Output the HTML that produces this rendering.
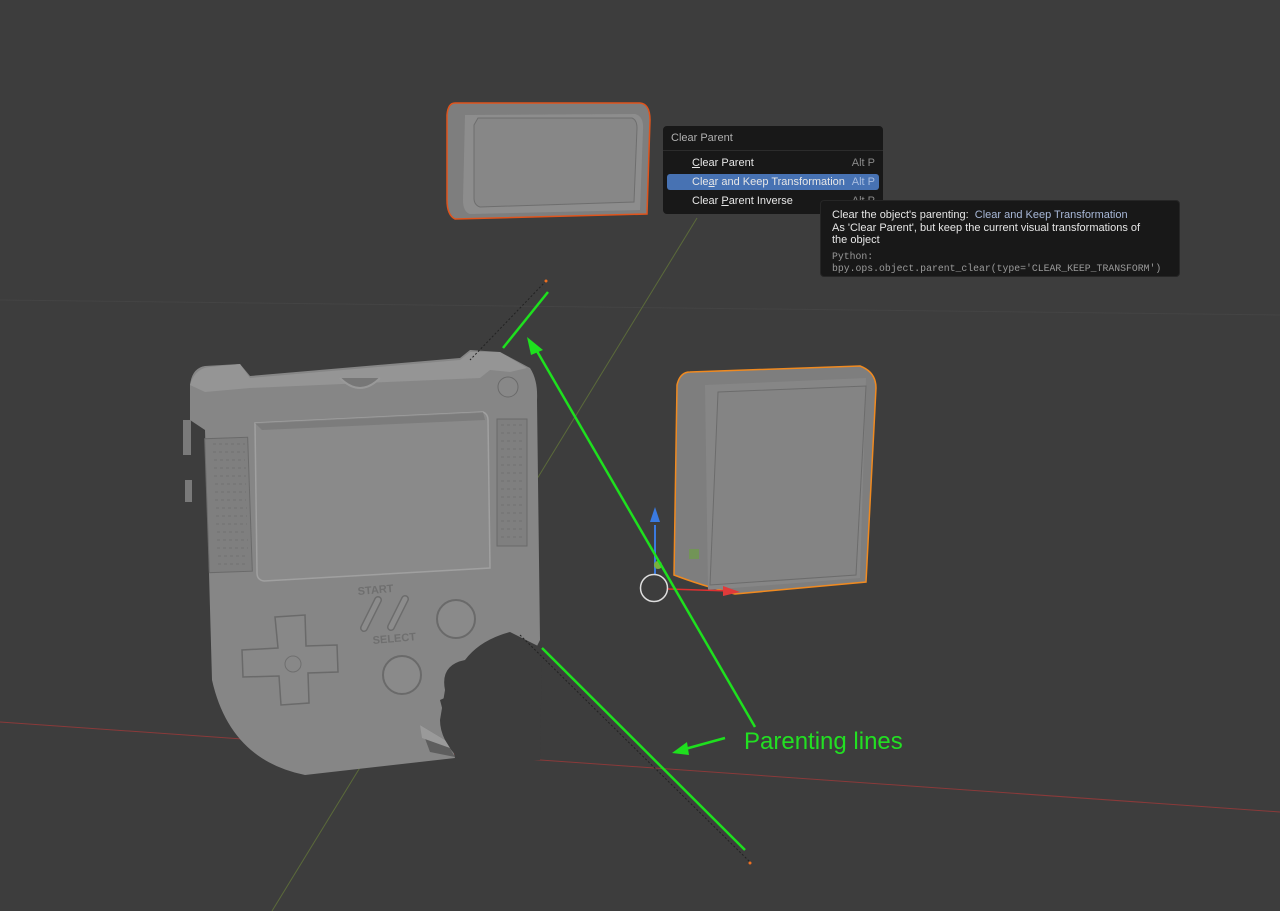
<!DOCTYPE html>
<html><head><meta charset="utf-8"><style>
html,body{margin:0;padding:0;width:1280px;height:911px;overflow:hidden;background:#3d3d3d;font-family:"Liberation Sans","DejaVu Sans",sans-serif}
svg{position:absolute;left:0;top:0}
.menu{position:absolute;left:663px;top:126px;width:220px;height:88px;background:#181818;border-radius:4px;font-size:11px;color:#e6e6e6}
.menu .t{position:absolute;left:8px;top:6px;color:#b0b0b0}
.menu .sep{position:absolute;left:0;right:0;top:24px;height:1px;background:#2c2c2c}
.it{position:absolute;left:4px;width:212px;height:16px;line-height:16px;border-radius:3px}
.it span{position:absolute;left:25px}
.it b{position:absolute;right:4px;font-weight:normal;color:#8a8a8a}
.hl{background:#4772b3}
.hl b{color:#a8bde0}
.tip{position:absolute;left:820px;top:200px;width:360px;height:77px;background:#181818;border:1px solid #262626;border-radius:4px;font-size:11px;color:#e6e6e6;box-sizing:border-box;padding:8px 11px;line-height:12.5px}
.tip .m{font-family:"Liberation Mono","DejaVu Sans Mono",monospace;color:#9a9a9a;margin-top:4px;font-size:9.8px}
.lbl{position:absolute;left:744px;top:728px;font-size:24px;color:#22e022}
</style></head><body>
<svg width="1280" height="911" viewBox="0 0 1280 911">
<line x1="0" y1="300" x2="1280" y2="315" stroke="#444" stroke-width="1"/>
<line x1="0" y1="722" x2="1280" y2="812" stroke="#8a3a3a" stroke-width="1"/>
<line x1="272" y1="911" x2="697" y2="218" stroke="#5b6a3a" stroke-width="1"/>
<!-- top cartridge -->
<path d="M455,103 L640,103 Q650,104 650,120 L647,214 L455,219 Q447,215 447,200 L447,115 Q448,103 455,103Z" fill="#7e7e7e" stroke="#e0541c" stroke-width="1.5"/>
<path d="M465,115 L635,114 Q644,116 643,130 L640,210 L470,214 Q463,212 463,200Z" fill="#8d8d8d"/>
<path d="M478,118 L632,118 Q637,120 637,128 L634,202 L480,207 Q474,205 474,198 L474,125Z" fill="#878787" stroke="#6e6e6e"/>
<!-- right box -->
<path d="M690,372 L860,366 Q876,372 876,388 L866,582 L735,594 Q700,585 674,575 L677,385 Q680,372 690,372Z" fill="#7e7e7e" stroke="#f08a20" stroke-width="1.5"/>
<path d="M705,385 L866,378 L860,578 L708,590 Z" fill="#868686"/>
<path d="M718,392 L866,386 L856,575 L710,585 Z" fill="#848484" stroke="#6c6c6c"/>
<rect x="689" y="549" width="10" height="10" fill="#6f9a4e" opacity="0.8"/>
<!-- gizmo -->
<line x1="655" y1="525" x2="655" y2="575" stroke="#3a7ae0" stroke-width="2"/>
<path d="M650,522 L655,507 L660,522Z" fill="#3a7ae0"/>
<line x1="668" y1="589" x2="730" y2="591" stroke="#e03030" stroke-width="1.5"/>
<path d="M723,586 L740,592 L723,596Z" fill="#e03a3a"/>
<circle cx="654" cy="588" r="13.5" fill="none" stroke="#ddd" stroke-width="1.5"/>
<circle cx="658" cy="565" r="4" fill="#7ab040"/>
<!-- gameboy body -->
<path d="M205,366 L240,364 L250,376 L460,358 L470,350 L500,352 L530,368 Q538,380 537,400 L540,640 L530,660 L440,700 L455,758 L305,775 Q230,760 212,680 L205,430 L190,420 L190,385 Q192,368 205,366Z" fill="#868686"/>
<path d="M190,385 Q195,368 210,367 L240,364 L250,378 L460,360 L470,352 L500,352 L527,368 L510,372 L490,370 L480,378 L250,388 L205,392 Z" fill="#959595"/>
<path d="M340,378 Q360,398 380,378" fill="#777" stroke="#999" stroke-width="2"/>
<circle cx="508" cy="387" r="10" fill="#888" stroke="#6a6a6a"/>
<rect x="183" y="420" width="8" height="35" fill="#7a7a7a"/>
<rect x="185" y="480" width="7" height="22" fill="#7a7a7a"/>
<!-- screen -->
<path d="M255,423 L483,412 Q488,414 488,420 L490,568 L264,581 Q257,580 257,573Z" fill="#8a8a8a" stroke="#a0a0a0" stroke-width="1.5"/>
<path d="M255,423 L483,412 L485,420 L262,430Z" fill="#6e6e6e" opacity="0.5"/>
<!-- grilles -->
<rect x="207" y="438" width="43" height="134" fill="#7f7f7f" stroke="#6a6a6a" transform="rotate(-2 228 505)"/>
<rect x="497" y="419" width="30" height="127" fill="#7f7f7f" stroke="#6a6a6a"/>
<g fill="none" stroke="#6e6e6e" stroke-width="0.8">
<path d="M213,444 L245,444 M213,452 L245,452 M214,460 L245,460 M214,468 L246,468 M214,476 L246,476 M215,484 L246,484 M215,492 L246,492 M215,500 L246,500 M216,508 L247,508 M216,516 L247,516 M216,524 L247,524 M217,532 L247,532 M217,540 L248,540 M217,548 L248,548 M218,556 L248,556 M218,564 L248,564" stroke-dasharray="3 3"/>
<path d="M501,425 L523,425 M501,433 L523,433 M501,441 L523,441 M501,449 L523,449 M501,457 L523,457 M501,465 L523,465 M501,473 L523,473 M501,481 L523,481 M501,489 L523,489 M501,497 L523,497 M501,505 L523,505 M501,513 L523,513 M501,521 L523,521 M501,529 L523,529 M501,537 L523,537" stroke-dasharray="3 3"/>
</g>
<!-- dpad -->
<path d="M275,617 L305,615 L306,646 L337,645 L338,672 L308,673 L309,703 L281,705 L279,676 L243,677 L242,650 L278,648Z" fill="#888" stroke="#6a6a6a" stroke-width="1.5"/>
<circle cx="293" cy="664" r="8" fill="none" stroke="#6f6f6f"/>
<!-- start/select -->
<path d="M364,628 L378,600" stroke="#6c6c6c" stroke-width="8" stroke-linecap="round"/>
<path d="M364,628 L378,600" stroke="#8c8c8c" stroke-width="5" stroke-linecap="round"/>
<path d="M391,627 L405,599" stroke="#6c6c6c" stroke-width="8" stroke-linecap="round"/>
<path d="M391,627 L405,599" stroke="#8c8c8c" stroke-width="5" stroke-linecap="round"/>
<text x="358" y="595" font-size="11" fill="#6f6f6f" font-family="Liberation Sans" font-weight="bold" transform="rotate(-5 358 595)">START</text>
<text x="373" y="644" font-size="11" fill="#6f6f6f" font-family="Liberation Sans" font-weight="bold" transform="rotate(-5 373 644)">SELECT</text>
<circle cx="456" cy="619" r="19" fill="#8a8a8a" stroke="#6a6a6a" stroke-width="2"/>
<circle cx="402" cy="675" r="19" fill="#8a8a8a" stroke="#6a6a6a" stroke-width="2"/>
<!-- bite -->
<path d="M445,690 Q440,665 465,660 Q480,640 510,632 L542,648 L540,760 L460,760 Q440,740 440,720Z" fill="#3d3d3d"/>
<path d="M420,725 L445,740 L455,757 L430,752 Z" fill="#5e5e5e"/>
<path d="M420,725 L445,740 L450,748 L422,738 Z" fill="#9a9a9a"/>
<!-- dashed parent lines -->
<line x1="546" y1="281" x2="470" y2="360" stroke="#222" stroke-width="1" stroke-dasharray="2 2"/>
<line x1="520" y1="635" x2="750" y2="862" stroke="#222" stroke-width="1" stroke-dasharray="2 2"/>
<circle cx="546" cy="281" r="1.5" fill="#f07020"/>
<circle cx="750" cy="863" r="1.5" fill="#f07020"/>
<!-- green annotation -->
<g stroke="#1ee01e" stroke-width="2.5" fill="#1ee01e">
<line x1="503" y1="348" x2="548" y2="292"/>
<line x1="755" y1="727" x2="534" y2="346"/>
<path d="M527,337 L543,350 L531,355Z" stroke="none"/>
<line x1="745" y1="850" x2="542" y2="648"/>
<line x1="725" y1="738" x2="685" y2="749"/>
<path d="M672,753 L687,742 L689,755Z" stroke="none"/>
</g>
</svg>
<div class="menu">
<div class="t">Clear Parent</div>
<div class="sep"></div>
<div class="it" style="top:29px"><span><u>C</u>lear Parent</span><b>Alt P</b></div>
<div class="it hl" style="top:48px"><span>Cle<u>a</u>r and Keep Transformation</span><b>Alt P</b></div>
<div class="it" style="top:67px"><span>Clear <u>P</u>arent Inverse</span><b>Alt P</b></div>
</div>
<div class="tip">Clear the object's parenting: &nbsp;<span style="color:#a8b8d8">Clear and Keep Transformation</span><br>As 'Clear Parent', but keep the current visual transformations of<br>the object<div class="m">Python:<br>bpy.ops.object.parent_clear(type='CLEAR_KEEP_TRANSFORM')</div></div>
<div class="lbl">Parenting lines</div>
</body></html>
